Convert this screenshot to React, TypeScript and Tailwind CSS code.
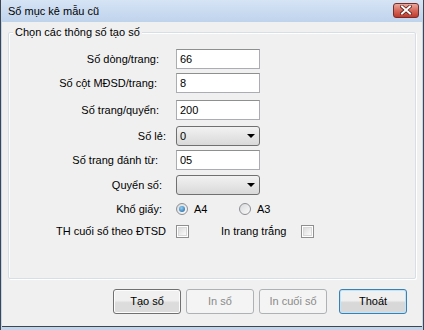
import React from "react";

const font = { fontFamily: '"Liberation Sans", Arial, sans-serif' };

function TextBox({ value }: { value: string }) {
  return (
    <div className="flex h-[20px] w-[84px] items-center border border-[#abadb3] border-t-[#8e8f8f] bg-white pl-[3px] text-[11px] text-black">
      {value}
    </div>
  );
}

function Combo({ value }: { value: string }) {
  return (
    <div className="flex h-[20px] w-[84px] items-center justify-between rounded-[3px] border border-[#707070] bg-gradient-to-b from-[#f2f2f2] to-[#d9d9d9] pl-[3px] pr-[4px] text-[11px] text-black">
      <span>{value}</span>
      <svg width="8" height="4" viewBox="0 0 8 4">
        <path d="M0 0h8L4 4z" fill="#000" />
      </svg>
    </div>
  );
}

function Radio({ checked }: { checked?: boolean }) {
  return (
    <span className="flex h-[12px] w-[12px] items-center justify-center rounded-full border border-[#8c8f94] bg-gradient-to-br from-[#d9dadc] to-[#fbfbfb]">
      {checked && (
        <span className="h-[6px] w-[6px] rounded-full bg-[radial-gradient(circle_at_40%_35%,#8fd1f7,#1c5a9a)]" />
      )}
    </span>
  );
}

function Check() {
  return (
    <span className="flex h-[13px] w-[13px] items-center justify-center border border-[#8f8f8f] bg-white">
      <span className="h-[9px] w-[9px] border border-[#d8d8d8] bg-gradient-to-br from-[#dcdcdc] to-[#fbfbfb]" />
    </span>
  );
}

function Row({
  label,
  pr,
  mt,
  children,
}: {
  label: string;
  pr: string;
  mt: string;
  children: React.ReactNode;
}) {
  return (
    <div className={`flex h-[20px] items-center ${mt}`}>
      <div className={`w-[158px] text-right text-[11px] text-black ${pr}`}>{label}</div>
      <div className="ml-[9px] flex items-center">{children}</div>
    </div>
  );
}

function Btn({ label, disabled, focus }: { label: string; disabled?: boolean; focus?: boolean }) {
  let cls =
    "flex h-[25px] w-[68px] items-center justify-center rounded-[3px] border text-[11px] ";
  if (disabled) cls += "border-[#adb2b5] bg-[#f4f4f4] text-[#8a8a8a]";
  else if (focus)
    cls +=
      "border-[#3c7fb1] bg-gradient-to-b from-[#f0f0f0] from-45% to-[#d8d8d8] to-55% text-black shadow-[inset_0_0_0_1px_#bde6fd]";
  else
    cls +=
      "border-[#707070] bg-gradient-to-b from-[#f0f0f0] from-45% to-[#dcdcdc] to-55% text-black shadow-[inset_0_0_0_1px_#fcfcfc]";
  return <div className={cls}>{label}</div>;
}

export default function App() {
  return (
    <div
      className="flex h-[330px] w-[424px] flex-col border-x border-x-[#3f4650] bg-[#c0d4ec] text-[11px]"
      style={font}
    >
      {/* title bar */}
      <div className="flex h-[22px] items-center justify-between bg-gradient-to-b from-[#d6e4f5] to-[#bfd3ec] pl-[7px] pr-[4px]">
        <span className="text-[11px] text-black">Sổ mục kê mẫu cũ</span>
        <div className="mb-[2px] flex h-[15px] w-[26px] items-center justify-center rounded-[3px] border border-[#7b2c25] bg-gradient-to-b from-[#e9a89c] via-[#d6695b] to-[#c0392c]">
          <svg width="12" height="10" viewBox="0 0 12 10">
            <path d="M2 1.5l8 7M10 1.5l-8 7" stroke="#5a1c16" strokeWidth="3.6" strokeLinecap="square" />
            <path d="M2 1.5l8 7M10 1.5l-8 7" stroke="#fff" strokeWidth="2" strokeLinecap="square" />
          </svg>
        </div>
      </div>

      {/* client */}
      <div className="ml-[1px] mr-[1px] flex flex-1 flex-col border-b border-b-[#3f4650] bg-[#f0f0f0] pl-[6px] pt-[3px]">
        <fieldset className="h-[254px] w-[408px] rounded-[2px] border border-[#d5dfe5] shadow-[inset_1px_1px_0_#fff,1px_1px_0_#fff]">
          <legend className="ml-[4px] bg-[#f0f0f0] px-[2px] text-[11px] leading-[14px] text-black">
            Chọn các thông số tạo số
          </legend>
          <Row label="Số dòng/trang:" pr="pr-[8px]" mt="mt-[10px]">
            <TextBox value="66" />
          </Row>
          <Row label="Số cột MĐSD/trang:" pr="pr-[10px]" mt="mt-[4px]">
            <TextBox value="8" />
          </Row>
          <Row label="Số trang/quyển:" pr="pr-[8px]" mt="mt-[7px]">
            <TextBox value="200" />
          </Row>
          <Row label="Số lẻ:" pr="pr-[1px]" mt="mt-[6px]">
            <Combo value="0" />
          </Row>
          <Row label="Số trang đánh từ:" pr="pr-[9px]" mt="mt-[4px]">
            <TextBox value="05" />
          </Row>
          <Row label="Quyển số:" pr="pr-[5px]" mt="mt-[5px]">
            <Combo value="" />
          </Row>
          <Row label="Khổ giấy:" pr="pr-[5px]" mt="mt-[4px]">
            <Radio checked />
            <span className="ml-[6px] w-[45px]">A4</span>
            <Radio />
            <span className="ml-[6px]">A3</span>
          </Row>
          <Row label="TH cuối sổ theo ĐTSD" pr="pr-[1px]" mt="mt-[2px]">
            <Check />
            <span className="ml-[32px] w-[80px]">In trang trắng</span>
            <Check />
          </Row>
        </fieldset>

        <div className="mt-[10px] flex pl-[105px]">
          <Btn label="Tạo sổ" />
          <div className="ml-[5px]">
            <Btn label="In sổ" disabled />
          </div>
          <div className="ml-[5px]">
            <Btn label="In cuối sổ" disabled />
          </div>
          <div className="ml-[12px]">
            <Btn label="Thoát" focus />
          </div>
        </div>
      </div>
      <div className="h-[3px]" />
    </div>
  );
}
